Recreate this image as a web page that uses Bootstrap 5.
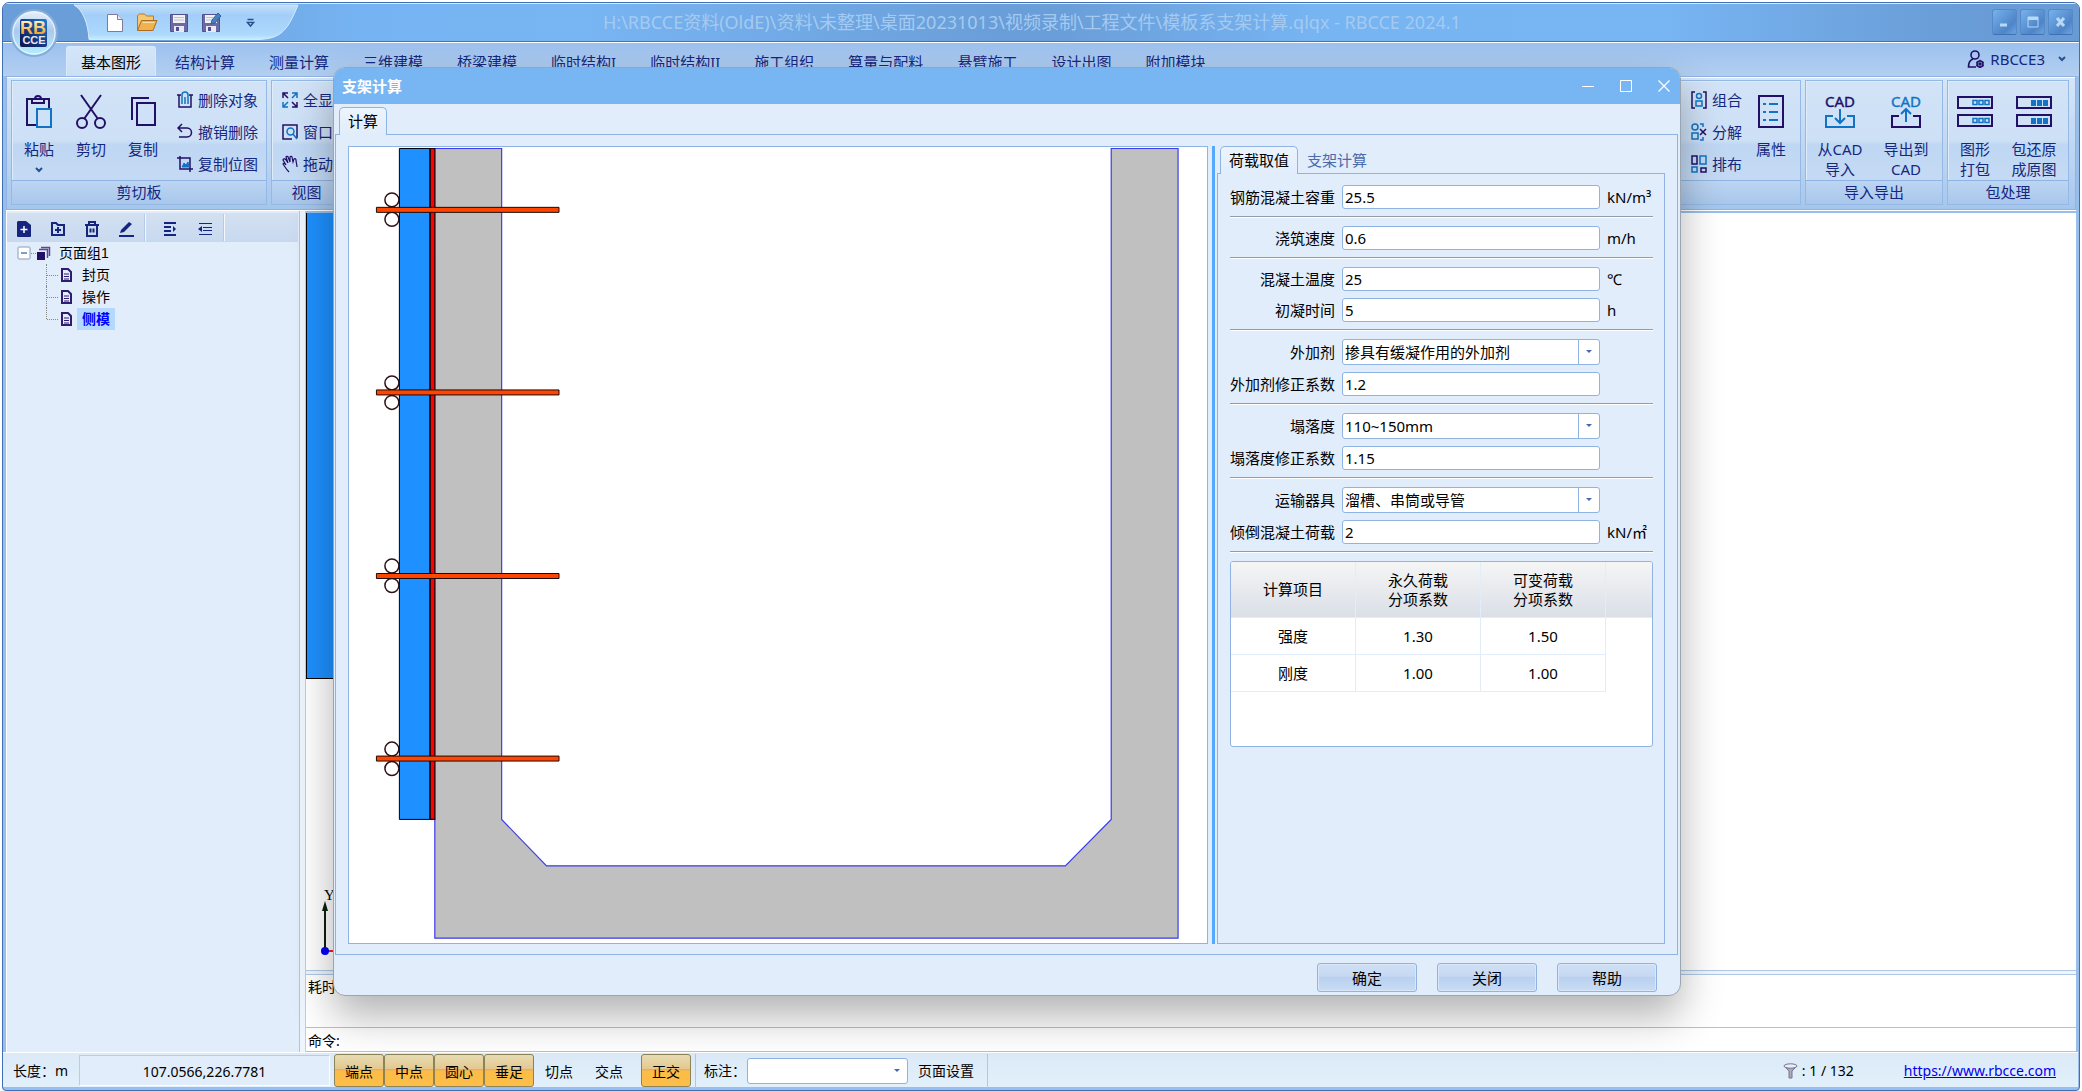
<!DOCTYPE html>
<html lang="zh-CN">
<head>
<meta charset="utf-8">
<meta name="viewport" content="width=device-width, initial-scale=1">
<title>RBCCE 2024.1</title>
<link rel="stylesheet" href="https://cdn.jsdelivr.net/npm/bootstrap@5.3.0/dist/css/bootstrap.min.css">
<script src="https://cdn.jsdelivr.net/npm/bootstrap@5.3.0/dist/js/bootstrap.bundle.min.js"></script>
<style>
:root{--line:#8fb3e2;--navy:#15277f;--ink:#220f66;--face:#e1edfb}
body{margin:0;height:100vh;overflow:hidden;background:#fff;padding:2px 2px 0;font-family:"Noto Sans","Noto Sans CJK SC",sans-serif;font-size:15px;line-height:20px;color:#000}
button{font:inherit;color:inherit;background:none;border:0;padding:0}
svg{display:block;flex:none}
.frame{height:100%;border:1px solid #416fb6;border-radius:7px 7px 4px 4px;background:#98bfec;overflow:hidden;padding-bottom:3px}
/* title bar */
.caption{height:39px;border-bottom:1px solid #4472b8;box-shadow:inset 0 1px #dcebfa;background:linear-gradient(90deg,#6a9ed8 0,#6a9ed8 6%,#76b3f2 17%,#78b5f3 28%,#6a9ed8 48%,#6a9ed8 51%,#76b4f2 63%,#78b5f3 80%,#6a9ed8 93%,#689ad4 100%)}
.logo{left:6px;top:4px;z-index:5}
.quick{margin-left:71px;width:226px;height:36px}
.quick-bg{left:0;top:0}
.quick-items{padding:7px 0 0 30px;gap:10px}
.doc-title{font-size:18px;color:#a5caf1;line-height:38px;white-space:nowrap;margin-left:303px}
.sysbtn{width:25px;height:26px;border-radius:3px;background:linear-gradient(135deg,#78b1ec,#4d85c8 70%,#6fa4de);border:1px solid #5589c8;border-bottom-color:#3d70b4;color:#b9d8f6;display:flex;align-items:center;justify-content:center}
/* ribbon */
.tabrow{height:34px;border-top:1px solid #fff;background:linear-gradient(#9cc1ef,#b3cff0);padding-left:63px;color:var(--navy)}
.rtab{height:30px;margin-top:3px;padding:0 16px;white-space:nowrap;border:1px solid transparent;border-bottom:0;line-height:26px}
.rtab.on{color:#000;padding:0 14px;margin-right:2px;background:linear-gradient(#d4e5f8,#cbdff6);border-color:#d9e8fa;border-radius:3px 3px 0 0}
.account{gap:5px;height:32px;padding-right:13px}
.ribbon{margin:0 3px;height:134px;border:1px solid var(--line);box-shadow:inset 0 1px #fff;padding:3px 6px 4px 4px;gap:4px;background:linear-gradient(#d6e6f8,#b8d2f1 70%,#a5c6ec);color:var(--navy)}
.rgroup{border:1px solid #95b9e7;box-shadow:inset 1px 1px #dfecfb;background:linear-gradient(#d2e3f7,#cde0f6 48%,#bfd7f3 52%,#c8dcf5)}
.rbody{flex:1;padding-left:1px}
.rname{height:24px;line-height:23px;border-top:1px solid #8fb3e2;background:linear-gradient(#bcd5f2,#a9c7eb);text-align:center}
.bigbtn{width:52px;display:flex;flex-direction:column;align-items:center;padding-top:13px}
.bigbtn.mid{width:58px}
.bigbtn.wide{width:66px}
.bigbtn svg{margin-bottom:10px}
.rstack{padding-top:3px}
.smallbtn{height:32px;display:flex;align-items:center;gap:5px;white-space:nowrap}
/* main */
.main-area{margin:0 3px;border-top:1px solid #fff;min-height:0}
.side{width:294px;background:var(--face);border:1px solid #fff;border-width:0 0 0 1px;box-shadow:inset -1px 0 #a9c5e6}
.side-tools{height:29px;margin-top:2px;margin-right:2px;background:linear-gradient(#d3e0f1,#c8d9ef);padding-left:10px}
.side-tools button{width:34px;height:29px}
.side-tools button svg{margin-top:2px}
.side-tools .cut{width:2px;height:27px;margin:0 18px 0 -9px;border-left:1px solid #b4cbe8;background:#f3f8fe}
.tree{font-size:14px;line-height:20px;font-family:"Liberation Sans","Noto Sans CJK SC",sans-serif;margin:0 0 0 10px;padding:0}
.tree,.tree ul{list-style:none}
.tree ul{margin:0 0 0 29px;padding:0}
.node{height:22px;display:flex;align-items:center}
.tree ul .node{border-left:1px dotted #888;position:relative;padding-left:14px}
.tree ul .node::before{content:"";position:absolute;left:0;top:11px;width:11px;border-top:1px dotted #888}
.tree ul li:last-child .node{border-left-color:transparent}
.tree ul li:last-child .node::after{content:"";position:absolute;left:-1px;top:0;height:11px;border-left:1px dotted #888}
.node .cap{margin-left:5px;padding:0 5px;height:22px;line-height:22px}
.node .cap.sel{background:#b4d9fc;color:#00f;font-weight:700}
.gutter{width:6px;background:#eef5fd;border-right:1px solid #b9cfe9}
.canvas{background:#fff;margin-top:2px}
.pier{left:0;top:0;width:60px;height:466px;background:#1e90ff;border:1px solid #000;border-top-width:0}
.axes{left:14px;bottom:7px}
.hsplit{height:5px;border:1px solid #b0c8e4;border-width:1px 0;background:#eef5fd}
.msgs{height:52px;background:#fff;font-size:14px;padding:2px}
.cmdline{height:25px;background:#fff;border:1px solid #a9c3e3;border-width:1px 0;font-size:14px;padding:3px 2px}
.cmdline input{border:0;outline:0;flex:1;min-width:0;background:none}
/* status bar */
.status{height:35px;padding-top:1px;background:linear-gradient(#dce9f6,#e2f0fc);border-top:1px solid #fff;font-size:14px;margin-right:1px}
.coord{width:251px;height:31px;line-height:31px;text-align:center;border:1px solid #b5cdea;border-color:#b5cdea #fff #fff #b5cdea;background:#e1edfb}
.snap{width:50px;height:33px;border:1px solid transparent;border-radius:3px;padding-top:2px}
.snap.on{border-color:#8c8358;background:linear-gradient(#e8dcb4 0,#e3c88f 45%,#eaa95a 47%,#fcbc48 52%,#fdbf49)}
.vline{width:1px;height:34px;background:#afc8e4}
.dim{width:161px;margin-left:1px}
.site{color:#00e;margin:0 22px 0 50px}
/* fields */
.field{border:1px solid var(--line);border-radius:3px;background:#fff;height:24px;width:100%;padding:0 2px;line-height:20px;color:#000;font-size:15px;appearance:none;outline:0;display:block}
select.field{height:26px}
.drop{position:relative}
.drop::after{content:"";position:absolute;right:8px;top:11px;border:3px solid transparent;border-top-color:#4668b0;border-bottom:0;pointer-events:none}
.drop.split::before{content:"";position:absolute;right:21px;top:1px;bottom:1px;border-left:1px solid var(--line);pointer-events:none}
/* dialog */
.dlg{left:330px;right:398px;top:64px;bottom:94px;border:1px solid #9aa5b3;border-radius:12px;background:var(--face);box-shadow:0 20px 42px rgba(0,0,0,.3);z-index:10;overflow:hidden}
.dlg-cap{height:36px;background:#78b5f3;color:#fff;padding:0 10px 0 8px}
.dlg-cap h1{font-size:15px;line-height:20px;margin:0;font-weight:700}
.dlg-cap button{width:12px;height:12px}
.ftab{height:28px;line-height:23px;border:1px solid var(--line);border-bottom:0;border-radius:5px 5px 0 0;padding:0 8px;background:linear-gradient(#ecf4fd,#e1edfb);margin-bottom:-1px;position:relative;z-index:1}
.ftab.off{border-color:transparent;background:none;color:#4a6cae}
.dpage{margin:0 2px 0 1px;border:1px solid var(--line);padding:11px 12px 10px 12px;min-height:0}
.sketch{border:1px solid var(--line);background:#fff;min-width:0}
.grip{width:3px;background:#55a8fa;margin:0 2px 0 4px}
.pane{width:448px}
.pane-box{border:1px solid var(--line);padding:11px 11px 0 12px}
.frow{display:grid;grid-template-columns:105px 258px auto;column-gap:7px;align-items:center;margin-bottom:7px}
.frow label{text-align:right;white-space:nowrap}
.rule{height:2px;background:#949ca6;border-bottom:1px solid #fff;margin-bottom:8px}
.gridbox{border:1px solid var(--line);border-radius:3px;background:#fff;height:186px;overflow:hidden}
.factors{border-collapse:separate;border-spacing:0;width:100%;table-layout:fixed;text-align:center}
.factors col.val{width:125px}
.factors th{font-weight:400;height:56px;line-height:19px;padding:0;background:linear-gradient(#f5f5f5,#dadfe7);border-bottom:1px solid #e1edfb;border-right:1px solid #e1edfb}
.factors th:last-child{border-right:0}
.factors td{height:37px;padding:0;border-right:1px solid #e1edfb;border-bottom:1px solid #e1edfb}
.factors td:last-child{border:0}
.dlg-foot{padding:8px 23px 3px 0;gap:20px}
.pushbtn{width:100px;height:29px;border:1px solid var(--line);border-radius:3px;background:linear-gradient(#cfe0f5,#c6d9f2 45%,#b9d0ee 50%,#c9dcf4);box-shadow:inset 0 0 0 1px #d9e7f8}
</style>
</head>
<body>
<div class="frame d-flex flex-column position-relative">
  <header class="caption d-flex flex-shrink-0">
    <svg class="logo position-absolute" width="50" height="52" viewBox="0 0 50 52">
      <defs>
        <linearGradient id="orb" x1="0" y1="0" x2="0" y2="1"><stop offset="0" stop-color="#eaf4fe"/><stop offset=".45" stop-color="#a8caef"/><stop offset="1" stop-color="#b5f0fd"/></linearGradient>
        <linearGradient id="tile" x1="1" y1="0" x2="0" y2="1"><stop offset="0" stop-color="#1b7fd4"/><stop offset=".5" stop-color="#173a86"/><stop offset="1" stop-color="#0c1545"/></linearGradient>
        <linearGradient id="gold" gradientUnits="userSpaceOnUse" x1="0" y1="13" x2="0" y2="28"><stop offset="0" stop-color="#fff3d2"/><stop offset=".45" stop-color="#fbd27d"/><stop offset="1" stop-color="#f09a1c"/></linearGradient>
      </defs>
      <circle cx="25" cy="26" r="23" fill="url(#orb)" stroke="#86acd9" stroke-width="2"/>
      <circle cx="25" cy="26" r="21" fill="none" stroke="#f0f8ff"/>
      <rect x="11" y="12" width="27" height="28" rx="2" fill="url(#tile)"/>
      <text x="24" y="27" font-size="18" font-weight="700" text-anchor="middle" fill="url(#gold)" font-family="Liberation Sans">RB</text>
      <text x="25" y="37" font-size="11" font-weight="700" text-anchor="middle" fill="#e6e9f2" font-family="Liberation Sans">CCE</text>
    </svg>
    <div class="quick position-relative flex-shrink-0">
      <svg class="quick-bg position-absolute" width="226" height="37" viewBox="0 0 226 37">
        <defs><linearGradient id="qg" x1="0" y1="0" x2="0" y2="1"><stop offset="0" stop-color="#c3dff8"/><stop offset=".3" stop-color="#a3cef9"/><stop offset=".85" stop-color="#add9fd"/><stop offset="1" stop-color="#c5ecff"/></linearGradient></defs>
        <path d="M0 2H224C214 26 208 36 184 36.500H15C14 20 9 7 0 2Z" fill="url(#qg)" stroke="#d6eafb"/>
      </svg>
      <div class="quick-items d-flex position-relative">
        <button aria-label="新建"><svg width="22" height="24" viewBox="0 0 22 24"><path d="M3.500 4.500h10l5 5v12h-15z" fill="#fff" stroke="#7d7a9c"/><path d="M13.500 4.500v5h5" fill="#e8e8f0" stroke="#7d7a9c"/></svg></button>
        <button aria-label="打开"><svg width="22" height="24" viewBox="0 0 22 24"><path d="M1.500 20.500v-15l2-1.500h5l2 2h7v4" fill="#f7c873" stroke="#b17a2a"/><path d="M1.500 20.500l4-10h15.500l-4 10z" fill="#f2b04e" stroke="#a86f22"/><path d="M6.500 12.500h12" stroke="#fbe0a6"/></svg></button>
        <button aria-label="保存"><svg width="22" height="24" viewBox="0 0 22 24"><path d="M2.500 4.500h17v17h-17z" fill="#6a6aa6" stroke="#51508c"/><path d="M5 5h12v8H5z" fill="#f3f0f5"/><path d="M6 7.500h10M6 10h10" stroke="#c3c0cf"/><path d="M6 16h10v6H6z" fill="#e9e9f3"/><path d="M8 17h3v4H8z" fill="#51508c"/></svg></button>
        <button aria-label="另存为"><svg width="22" height="24" viewBox="0 0 22 24"><path d="M2.500 4.500h17v17h-17z" fill="#6a6aa6" stroke="#51508c"/><path d="M5 5h12v8H5z" fill="#f3f0f5"/><path d="M6 7.500h7M6 10h6" stroke="#c3c0cf"/><path d="M6 16h10v6H6z" fill="#e9e9f3"/><path d="M8 17h3v4H8z" fill="#51508c"/><path d="M11 14l1-4 6-7 3 3-6 7z" fill="#4583c0" stroke="#335f97"/></svg></button>
        <button class="ms-2" aria-label="自定义"><svg width="22" height="24" viewBox="0 0 22 24"><path d="M7.500 9.500h6M7.500 12.500h6l-3 3.500z" fill="#dcecff" stroke="#26508f" stroke-width="1.500"/></svg></button>
      </div>
    </div>
    <div class="doc-title flex-grow-1">H:\RBCCE资料(OldE)\资料\未整理\桌面20231013\视频录制\工程文件\模板系支架计算.qlqx - RBCCE 2024.1</div>
    <div class="d-flex flex-shrink-0" style="gap:3px;padding:6px 6px 0 0">
      <button class="sysbtn" aria-label="最小化"><svg width="12" height="12"><path d="M1 9h7" stroke="currentColor" stroke-width="3"/></svg></button>
      <button class="sysbtn" aria-label="最大化"><svg width="12" height="12"><path d="M1 1h10v10h-10z" fill="none" stroke="currentColor"/><path d="M1 2.500h10" stroke="currentColor" stroke-width="3"/></svg></button>
      <button class="sysbtn" aria-label="关闭"><svg width="12" height="12"><path d="M2 2l7 8M9 2l-7 8" stroke="currentColor" stroke-width="3"/></svg></button>
    </div>
  </header>

  <nav class="tabrow d-flex flex-shrink-0">
    <button class="rtab on">基本图形</button><button class="rtab">结构计算</button><button class="rtab">测量计算</button><button class="rtab">三维建模</button><button class="rtab">桥梁建模</button><button class="rtab">临时结构I</button><button class="rtab">临时结构II</button><button class="rtab">施工组织</button><button class="rtab">算量与配料</button><button class="rtab">悬臂施工</button><button class="rtab">设计出图</button><button class="rtab">附加模块</button>
    <button class="account ms-auto d-flex align-items-center">
      <svg width="18" height="18" viewBox="0 0 18 18" fill="none" stroke="#220f66" stroke-width="1.600"><circle cx="8" cy="5" r="4"/><path d="M6 9C3 10 1.500 13 1.500 17H9"/><circle cx="13" cy="14" r="3"/><circle cx="13" cy="14" r="1"/><path d="M13 9.800v1M13 17v1M9.500 12l1 .5M15.500 15.500l1 .5M9.500 16l1-.5M15.500 12.500l1-.5"/></svg>
      <span>RBCCE3</span>
      <svg class="ms-2" width="8" height="8" viewBox="0 0 8 8"><path d="M1 2l3 3 3-3" fill="none" stroke="#26508f" stroke-width="2"/></svg>
    </button>
  </nav>

  <section class="ribbon d-flex flex-shrink-0">
    <div class="rgroup d-flex flex-column" style="width:256px">
      <div class="rbody d-flex">
        <button class="bigbtn"><svg width="28" height="35" viewBox="0 0 28 35" fill="none" stroke="#220f66" stroke-width="2"><path d="M11 31H2V5h22v9"/><path d="M7 5v4h12V5h-3a3 3 0 0 0-6 0z"/><path d="M12 15h14v18H12z" stroke="#1173c5"/></svg>粘贴<svg class="mb-0 mt-2" width="8" height="6" viewBox="0 0 8 6"><path d="M1 1l3 3 3-3" fill="none" stroke="#26508f" stroke-width="2"/></svg></button>
        <button class="bigbtn"><svg width="30" height="35" viewBox="0 0 30 35" fill="none" stroke="#220f66" stroke-width="2"><path d="M5 1l17 24M25 1L8 25"/><circle cx="6" cy="29" r="5"/><circle cx="24" cy="29" r="5"/></svg>剪切</button>
        <button class="bigbtn"><svg width="28" height="35" viewBox="0 0 28 35" fill="none" stroke="#220f66" stroke-width="2"><path d="M8 9h18v22H8zM20 4H3v22"/></svg>复制</button>
        <div class="rstack ms-2">
          <button class="smallbtn"><svg width="16" height="18" viewBox="0 0 16 18" fill="none" stroke="#220f66" stroke-width="1.500"><path d="M0 4h4M12 4h4M2 4v12h12V4"/><path d="M5 13V4a3 3 0 0 1 6 0v9M8 6v7" stroke="#1173c5"/></svg>删除对象</button>
          <button class="smallbtn"><svg width="16" height="18" viewBox="0 0 16 18" fill="none" stroke="#220f66" stroke-width="1.500"><path d="M5 1L1 5l4 4M1 5h9c6 0 6 9 0 9H2"/></svg>撤销删除</button>
          <button class="smallbtn"><svg width="16" height="18" viewBox="0 0 16 18" fill="none" stroke="#220f66" stroke-width="1.500"><path d="M3 1v13h13M0 3h13v14"/><path d="M5 12l2-4 2 2 2-3 1 5z" fill="#1173c5" stroke="#1173c5" stroke-width="1"/></svg>复制位图</button>
        </div>
      </div>
      <div class="rname">剪切板</div>
    </div>
    <div class="rgroup d-flex flex-column" style="width:71px">
      <div class="rbody d-flex">
        <div class="rstack" style="padding-left:9px">
          <button class="smallbtn"><svg width="16" height="16" viewBox="0 0 16 16" fill="none" stroke="#220f66" stroke-width="1.500"><path d="M1 6V1h5M1 1l5 5M10 15h5v-5M15 15l-5-5"/><path d="M10 1h5v5M15 1l-5 5M1 10v5h5M1 15l5-5" stroke="#1173c5"/></svg>全显</button>
          <button class="smallbtn"><svg width="16" height="16" viewBox="0 0 16 16" fill="none" stroke="#220f66" stroke-width="1.500"><path d="M10 15H1V1h14v13"/><circle cx="8.500" cy="7.500" r="3.500" stroke="#1173c5"/><path d="M11 10l4 5" stroke="#1173c5"/></svg>窗口</button>
          <button class="smallbtn"><svg width="16" height="18" viewBox="0 0 16 18" fill="none" stroke="#220f66" stroke-width="1.200"><path d="M7 17C4 14 3 12 1 9c0-1 2-1 3 1L1 5c0-1 2-2 3 0l2 3L4 2c0-1 2-1 2 0l2 5V2c0-1 2-1 2 0l1 5 1-3c1-1 2 0 2 1 0 2 1 5 1 7"/></svg>拖动</button>
        </div>
      </div>
      <div class="rname">视图</div>
    </div>
    <div class="flex-grow-1"></div>
    <div class="rgroup d-flex flex-column" style="width:146px">
      <div class="rbody d-flex justify-content-end">
        <div class="rstack">
          <button class="smallbtn"><svg width="16" height="18" viewBox="0 0 16 18" fill="none" stroke="#220f66" stroke-width="1.500"><path d="M4 1H1v16h3M12 1h3v16h-3"/><g stroke="#1173c5"><circle cx="8" cy="5" r="2.500"/><path d="M5 10h6v5H5z"/></g></svg>组合</button>
          <button class="smallbtn"><svg width="16" height="18" viewBox="0 0 16 18" fill="none" stroke="#1173c5" stroke-width="1.500"><circle cx="4" cy="4" r="3"/><path d="M1 10h6v6H1zM9 1h3v3M9 17h3v-3"/><path d="M9 6l6 6M15 6l-6 6" stroke="#220f66"/></svg>分解</button>
          <button class="smallbtn"><svg width="16" height="18" viewBox="0 0 16 18" fill="none" stroke-width="1.500"><g stroke="#220f66"><path d="M1 1h5v8H1zM10 13h5v4h-5z"/></g><g stroke="#1173c5"><path d="M9 1h6v8H9zM1 12h5v5H1z"/></g></svg>排布</button>
        </div>
        <button class="bigbtn mid"><svg width="28" height="35" viewBox="0 0 28 35" fill="none" stroke-width="2"><path d="M2 2h24v31H2z" stroke="#220f66"/><path d="M12 10h9M12 18h9M12 26h9M6 10h3M6 18h3M6 26h3" stroke="#1173c5"/></svg>属性</button>
      </div>
      <div class="rname"></div>
    </div>
    <div class="rgroup d-flex flex-column" style="width:138px">
      <div class="rbody d-flex">
        <button class="bigbtn wide"><svg width="32" height="35" viewBox="0 0 32 35" fill="none" stroke="#1173c5" stroke-width="2"><text x="16" y="13" text-anchor="middle" font-size="15" fill="#220f66" stroke="#220f66" stroke-width=".4">CAD</text><path d="M9 22H2v11h28V22h-7M16 15v14M11 24l5 5 5-5"/></svg>从CAD<br>导入</button>
        <button class="bigbtn wide"><svg width="32" height="35" viewBox="0 0 32 35" fill="none" stroke="#220f66" stroke-width="2"><text x="16" y="13" text-anchor="middle" font-size="15" fill="#1173c5" stroke="#1173c5" stroke-width=".4">CAD</text><path d="M9 22H2v11h28V22h-7"/><path d="M16 28V15M11 20l5-5 5 5" stroke="#1173c5"/></svg>导出到<br>CAD</button>
      </div>
      <div class="rname">导入导出</div>
    </div>
    <div class="rgroup d-flex flex-column" style="width:122px">
      <div class="rbody d-flex">
        <button class="bigbtn"><svg width="36" height="35" viewBox="0 0 36 35" fill="none" stroke="#220f66" stroke-width="2"><path d="M1 3h34v11H1zM1 21h34v11H1z"/><g stroke="#1173c5" stroke-width="1.500"><path d="M16 6.500h4v4h-4zM22 6.500h4v4h-4zM28 6.500h4v4h-4zM16 24.500h4v4h-4zM22 24.500h4v4h-4zM28 24.500h4v4h-4z"/></g></svg>图形<br>打包</button>
        <button class="bigbtn wide"><svg width="36" height="35" viewBox="0 0 36 35" fill="none" stroke="#220f66" stroke-width="2"><path d="M1 3h34v11H1zM1 21h34v11H1z"/><g fill="#1173c5" stroke="none"><path d="M15 6h5v6h-5zM21 6h5v6h-5zM27 6h5v6h-5zM15 24h5v6h-5zM21 24h5v6h-5zM27 24h5v6h-5z"/></g></svg>包还原<br>成原图</button>
      </div>
      <div class="rname">包处理</div>
    </div>
  </section>

  <main class="main-area d-flex flex-grow-1">
    <aside class="side flex-shrink-0">
      <div class="side-tools d-flex align-items-center">
        <button aria-label="新建页面"><svg width="14" height="16" viewBox="0 0 14 16"><path d="M1 0h8l5 4v11a1 1 0 0 1-1 1H1a1 1 0 0 1-1-1V1z" fill="#16267f"/><path d="M7 5v7M3.500 8.500h7" stroke="#fff" stroke-width="1.500"/></svg></button>
        <button aria-label="新建组"><svg width="14" height="16" viewBox="0 0 14 16"><path d="M1 14V2h4l2 2h6v10z" fill="none" stroke="#16267f" stroke-width="2"/><path d="M7 6v6M4 9h6" stroke="#16267f" stroke-width="2"/></svg></button>
        <button aria-label="删除"><svg width="14" height="16" viewBox="0 0 14 16"><path d="M0 4h14M4 4V1h6v3M2 4v11h10V4M5.500 7.500v4M8.500 7.500v4" fill="none" stroke="#16267f" stroke-width="2"/></svg></button>
        <button aria-label="编辑"><svg width="15" height="16" viewBox="0 0 15 16"><path d="M0 15h15" stroke="#16267f" stroke-width="2"/><path d="M1 12l1-3L10 1l3 2-8 8z" fill="#16267f"/></svg></button>
        <span class="cut"></span>
        <button aria-label="缩进"><svg width="13" height="16" viewBox="0 0 13 16"><path d="M0 2h12M0 6h7M0 10h7M0 14h12" stroke="#16267f" stroke-width="2"/><path d="M9 5l3 3-3 3z" fill="#16267f"/></svg></button>
        <button aria-label="减少缩进"><svg width="15" height="16" viewBox="0 0 15 16"><path d="M1 2.500h13M5 6.500h9M5 9.500h9M1 13.500h13" stroke="#16267f"/><path d="M4 5v6L0 8z" fill="#16267f"/></svg></button>
        <span class="cut"></span>
      </div>
      <ul class="tree">
        <li>
          <div class="node"><svg width="34" height="16" viewBox="0 0 34 16"><rect x="1" y="2" width="12" height="12" rx="1" fill="#fff" stroke="#8c9cba"/><path d="M4 8h6" stroke="#5a7fa8" stroke-width="1.500"/><path d="M14 8.500h5" stroke="#888" stroke-dasharray="1 1"/><path d="M20 7h8v8h-8z" fill="#220f66"/><path d="M22 4.500h8.500V13M24 2.500h8.500V11" fill="none" stroke="#5b4a8f" stroke-width="1.500"/></svg><span class="cap ps-1 ms-1">页面组1</span></div>
          <ul>
            <li><div class="node"><svg width="11" height="14" viewBox="0 0 11 14"><path d="M1 1h6l3 3v9H1z" fill="none" stroke="#2f1c70" stroke-width="2"/><path d="M3 6h5M3 8.500h5M3 11h5" stroke="#2f1c70"/></svg><span class="cap">封页</span></div></li>
            <li><div class="node"><svg width="11" height="14" viewBox="0 0 11 14"><path d="M1 1h6l3 3v9H1z" fill="none" stroke="#2f1c70" stroke-width="2"/><path d="M3 6h5M3 8.500h5M3 11h5" stroke="#2f1c70"/></svg><span class="cap">操作</span></div></li>
            <li><div class="node"><svg width="11" height="14" viewBox="0 0 11 14"><path d="M1 1h6l3 3v9H1z" fill="none" stroke="#2f1c70" stroke-width="2"/><path d="M3 6h5M3 8.500h5M3 11h5" stroke="#2f1c70"/></svg><span class="cap sel">侧模</span></div></li>
          </ul>
        </li>
      </ul>
    </aside>
    <div class="gutter flex-shrink-0"></div>
    <div class="d-flex flex-column flex-grow-1" style="min-width:0">
      <div class="canvas flex-grow-1 position-relative">
        <div class="pier position-absolute"></div>
        <svg class="axes position-absolute" width="60" height="80" viewBox="0 0 60 80"><text x="4" y="17" font-family="Liberation Serif" font-size="15">Y</text><path d="M5 68V27" stroke="#0b200b" stroke-width="2"/><path d="M5 18l3 10H2z" fill="#0b200b"/><path d="M5 68h50" stroke="#e22" stroke-width="2"/><circle cx="5" cy="68" r="4" fill="#00f"/></svg>
      </div>
      <div class="hsplit"></div>
      <div class="msgs">耗时</div>
      <div class="cmdline d-flex"><label for="cmd">命令:</label><input id="cmd" type="text"></div>
    </div>
  </main>

  <footer class="status d-flex align-items-center flex-shrink-0">
    <span style="width:76px;padding-left:10px">长度：m</span>
    <div class="coord">107.0566,226.7781</div>
    <button class="snap on ms-1">端点</button><button class="snap on">中点</button><button class="snap on">圆心</button><button class="snap on">垂足</button><button class="snap">切点</button><button class="snap">交点</button><button class="snap on" style="margin-left:7px">正交</button>
    <span class="vline" style="margin:0 8px 0 4px"></span>
    <label for="dimstyle">标注：</label>
    <div class="drop dim"><select class="field" id="dimstyle"><option></option></select></div>
    <button style="margin:0 13px 0 10px">页面设置</button>
    <span class="vline"></span>
    <span class="ms-auto d-flex align-items-center" style="gap:4px"><svg width="15" height="16" viewBox="0 0 15 16"><path d="M1 3l5 5v7h3V8l5-5z" fill="#a9aabb" stroke="#74758c"/><ellipse cx="7.500" cy="3" rx="6.500" ry="2.200" fill="#ececf3" stroke="#74758c"/></svg>: 1 / 132</span>
    <a class="site" href="https://www.rbcce.com">https://www.rbcce.com</a>
  </footer>

  <div class="dlg position-absolute d-flex flex-column" role="dialog" aria-labelledby="dlgt">
    <div class="dlg-cap d-flex align-items-center flex-shrink-0">
      <h1 id="dlgt" class="me-auto">支架计算</h1>
      <div class="d-flex" style="gap:26px">
        <button aria-label="最小化"><svg width="12" height="12"><path d="M0 6.500h12" stroke="#fff"/></svg></button>
        <button aria-label="最大化"><svg width="12" height="12"><path d="M.5.5h11v11H.5z" fill="none" stroke="#fff"/></svg></button>
        <button aria-label="关闭"><svg width="12" height="12"><path d="M.5.5l11 11M11.500.5l-11 11" stroke="#fff" stroke-width="1.200"/></svg></button>
      </div>
    </div>
    <div class="d-flex" style="padding:3px 0 0 5px"><button class="ftab">计算</button></div>
    <div class="dpage d-flex flex-grow-1">
      <div class="sketch flex-grow-1">
        <svg width="100%" height="100%" viewBox="349 147 860 796" preserveAspectRatio="xMinYMin meet">
          <path d="M435 148.500H502V821L547 867.500H1067L1113 821V148.500H1180V940H435z" fill="#c0c0c0" stroke="#3c3ce8" stroke-width="1.200"/>
          <path d="M399.500 148.500h30.500v672.500h-30.500z" fill="#1e90ff" stroke="#000"/>
          <path d="M430.500 148.500h4.500v672.500h-4.500z" fill="#f00" stroke="#200" stroke-width="1.200"/>
          <g fill="#fff" stroke="#2c1116" stroke-width="1.500">
            <circle cx="392" cy="200" r="7"/><circle cx="392" cy="219.500" r="7"/>
            <circle cx="392" cy="383.500" r="7"/><circle cx="392" cy="403" r="7"/>
            <circle cx="392" cy="567" r="7"/><circle cx="392" cy="586.500" r="7"/>
            <circle cx="392" cy="750.500" r="7"/><circle cx="392" cy="770" r="7"/>
          </g>
          <g fill="#ff4500" stroke="#1c0a08">
            <path d="M376.500 207.500h183v5h-183z"/><path d="M376.500 390.500h183v5h-183z"/><path d="M376.500 574.500h183v5h-183z"/><path d="M376.500 757.500h183v5h-183z"/>
          </g>
        </svg>
      </div>
      <div class="grip flex-shrink-0"></div>
      <div class="pane d-flex flex-column flex-shrink-0">
        <div class="d-flex" style="padding-left:3px"><button class="ftab">荷载取值</button><button class="ftab off">支架计算</button></div>
        <div class="pane-box flex-grow-1">
          <div class="frow"><label for="f1">钢筋混凝土容重</label><input id="f1" class="field" value="25.5"><span>kN/m³</span></div>
          <div class="rule"></div>
          <div class="frow"><label for="f2">浇筑速度</label><input id="f2" class="field" value="0.6"><span>m/h</span></div>
          <div class="rule"></div>
          <div class="frow"><label for="f3">混凝土温度</label><input id="f3" class="field" value="25"><span>℃</span></div>
          <div class="frow"><label for="f4">初凝时间</label><input id="f4" class="field" value="5"><span>h</span></div>
          <div class="rule"></div>
          <div class="frow"><label for="f5">外加剂</label><div class="drop split"><select id="f5" class="field"><option>掺具有缓凝作用的外加剂</option></select></div></div>
          <div class="frow"><label for="f6">外加剂修正系数</label><input id="f6" class="field" value="1.2"></div>
          <div class="rule"></div>
          <div class="frow"><label for="f7">塌落度</label><div class="drop split"><select id="f7" class="field"><option>110~150mm</option></select></div></div>
          <div class="frow"><label for="f8">塌落度修正系数</label><input id="f8" class="field" value="1.15"></div>
          <div class="rule"></div>
          <div class="frow"><label for="f9">运输器具</label><div class="drop split"><select id="f9" class="field"><option>溜槽、串筒或导管</option></select></div></div>
          <div class="frow"><label for="f10">倾倒混凝土荷载</label><input id="f10" class="field" value="2"><span>kN/㎡</span></div>
          <div class="rule"></div>
          <div class="gridbox">
            <table class="factors">
              <colgroup><col class="val"><col class="val"><col class="val"><col></colgroup>
              <thead><tr><th>计算项目</th><th>永久荷载<br>分项系数</th><th>可变荷载<br>分项系数</th><th></th></tr></thead>
              <tbody><tr><td>强度</td><td>1.30</td><td>1.50</td><td></td></tr><tr><td>刚度</td><td>1.00</td><td>1.00</td><td></td></tr></tbody>
            </table>
          </div>
        </div>
      </div>
    </div>
    <div class="dlg-foot d-flex justify-content-end flex-shrink-0"><button class="pushbtn">确定</button><button class="pushbtn">关闭</button><button class="pushbtn">帮助</button></div>
  </div>
</div>
</body>
</html>
